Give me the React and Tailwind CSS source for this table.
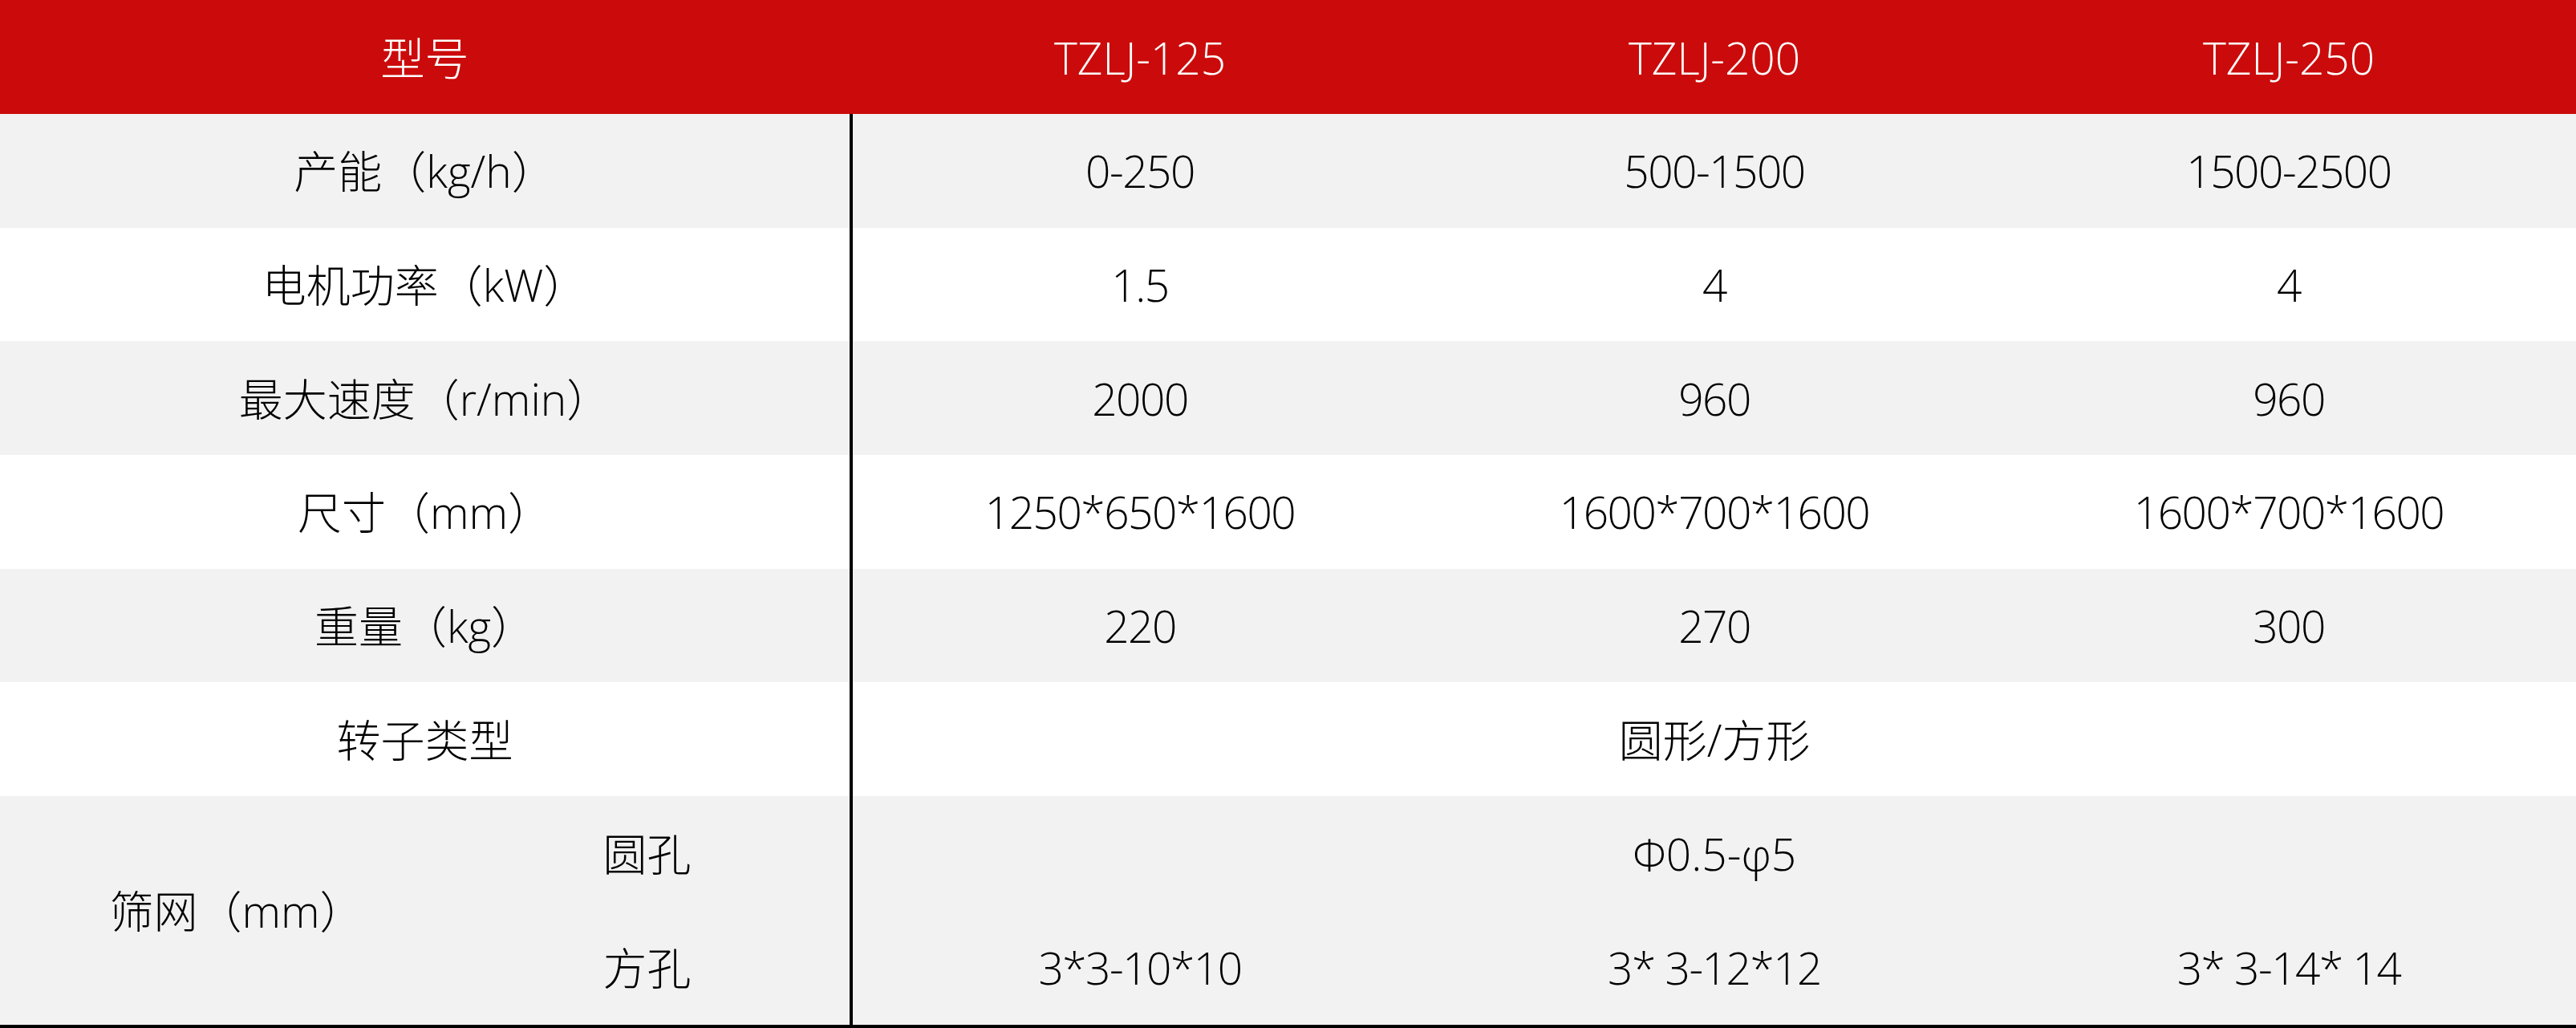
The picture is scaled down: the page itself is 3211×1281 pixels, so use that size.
import React from "react";

const rows = [
  { label: "产能（kg/h）", vals: ["0-250", "500-1500", "1500-2500"], bg: "bg-[#f2f2f2]" },
  { label: "电机功率（kW）", vals: ["1.5", "4", "4"], bg: "bg-white" },
  { label: "最大速度（r/min）", vals: ["2000", "960", "960"], bg: "bg-[#f2f2f2]" },
  { label: "尺寸（mm）", vals: ["1250*650*1600", "1600*700*1600", "1600*700*1600"], bg: "bg-white" },
  { label: "重量（kg）", vals: ["220", "270", "300"], bg: "bg-[#f2f2f2]" },
];

export default function App() {
  return (
    <div className="w-[3211px] h-[1281px] bg-white font-['Open_Sans','Noto_Sans_CJK_SC',sans-serif] font-light text-[55px] text-black leading-none">
      <div className="flex h-[142px] bg-[#cb0b0b] text-white">
        <div className="w-[1059px] flex items-center justify-center">型号</div>
        <div className="w-[4px]" />
        <div className="flex-1 flex items-center justify-center">TZLJ-125</div>
        <div className="flex-1 flex items-center justify-center">TZLJ-200</div>
        <div className="flex-1 flex items-center justify-center">TZLJ-250</div>
      </div>
      {rows.map((r) => (
        <div key={r.label} className={`flex h-[141.67px] ${r.bg}`}>
          <div className="w-[1063px] border-r-4 border-black flex items-center justify-center">{r.label}</div>
          {r.vals.map((v, i) => (
            <div key={i} className="flex-1 flex items-center justify-center tracking-[-1.5px]">{v}</div>
          ))}
        </div>
      ))}
      <div className="flex h-[141.67px] bg-white">
        <div className="w-[1063px] border-r-4 border-black flex items-center justify-center">转子类型</div>
        <div className="flex-1 flex items-center justify-center">圆形/方形</div>
      </div>
      <div className="flex h-[289px] bg-[#f2f2f2] border-b-4 border-black">
        <div className="w-[1063px] border-r-4 border-black flex">
          <div className="w-[590px] flex items-center justify-center">筛网（mm）</div>
          <div className="flex-1 flex flex-col pr-[36px]">
            <div className="flex-1 flex items-center justify-center">圆孔</div>
            <div className="flex-1 flex items-center justify-center">方孔</div>
          </div>
        </div>
        <div className="flex-1 flex flex-col">
          <div className="flex-1 flex items-center justify-center">Φ0.5-φ5</div>
          <div className="flex-1 flex tracking-[-1.5px]">
            <div className="flex-1 flex items-center justify-center">3*3-10*10</div>
            <div className="flex-1 flex items-center justify-center">3* 3-12*12</div>
            <div className="flex-1 flex items-center justify-center">3* 3-14* 14</div>
          </div>
        </div>
      </div>
    </div>
  );
}
